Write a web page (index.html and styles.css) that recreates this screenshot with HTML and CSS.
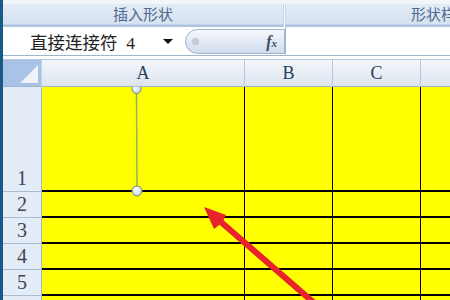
FILE: index.html
```html
<!DOCTYPE html>
<html lang="zh-CN">
<head>
    <meta charset="UTF-8">
    <title>直接连接符</title>
    <link rel="stylesheet" href="styles.css">
</head>
<body>
    <div class="app">
        <div class="edge"></div>
        <div class="main">
            <div class="ribbon">
                <div class="group group-insert">插入形状</div>
                <div class="group-sep"></div>
                <div class="group group-style">形状样式</div>
            </div>

            <div class="formula-bar">
                <div class="name-box">
                    <span class="name-text">直接连接符&nbsp;&nbsp;4</span>
                    <span class="drop"></span>
                </div>
                <div class="fx-pill">
                    <span class="dot"></span>
                    <span class="fx"><i>f</i><small>x</small></span>
                </div>
                <div class="formula-input"></div>
            </div>

            <div class="sheet">
                <div class="corner"><span class="tri"></span></div>
                <div class="col-head">A</div>
                <div class="col-head">B</div>
                <div class="col-head">C</div>
                <div class="col-head"></div>

                <div class="row-head">1</div>
                <div class="cell"></div><div class="cell"></div><div class="cell"></div><div class="cell"></div>
                <div class="row-head">2</div>
                <div class="cell"></div><div class="cell"></div><div class="cell"></div><div class="cell"></div>
                <div class="row-head">3</div>
                <div class="cell"></div><div class="cell"></div><div class="cell"></div><div class="cell"></div>
                <div class="row-head">4</div>
                <div class="cell"></div><div class="cell"></div><div class="cell"></div><div class="cell"></div>
                <div class="row-head">5</div>
                <div class="cell"></div><div class="cell"></div><div class="cell"></div><div class="cell"></div>
                <div class="row-head"></div>
                <div class="cell"></div><div class="cell"></div><div class="cell"></div><div class="cell"></div>
            </div>
        </div>

        <!-- connector shape + red annotation arrow drawn over the sheet -->
        <svg class="overlay" width="450" height="300" viewBox="0 0 450 300">
            <defs>
                <clipPath id="below-head">
                    <rect x="0" y="87" width="450" height="213"/>
                </clipPath>
                <radialGradient id="handle" cx="40%" cy="35%" r="70%">
                    <stop offset="0" stop-color="#ffffff"/>
                    <stop offset="1" stop-color="#b9cfee"/>
                </radialGradient>
            </defs>
            <line x1="136.5" y1="90" x2="137" y2="191" stroke="#86b95f" stroke-width="1.5"/>
            <circle cx="136.5" cy="89" r="4.5" fill="url(#handle)" stroke="#7a8a66" stroke-width="1" clip-path="url(#below-head)"/>
            <circle cx="137" cy="191" r="5" fill="url(#handle)" stroke="#7a8a66" stroke-width="1"/>
            <polygon fill="#e8232b"
                points="204,207 226,215 223.5,220.2 322,305.7 318,310.3 219.5,224.8 214,229"/>
        </svg>
    </div>
</body>
</html>
```

FILE: styles.css
```css
* {
    margin: 0;
    padding: 0;
    box-sizing: border-box;
}

body {
    width: 450px;
    height: 300px;
    overflow: hidden;
    background: #ffffff;
    font-family: "Liberation Serif", "Noto Sans CJK SC", serif;
}

.app {
    position: relative;
    display: flex;
    width: 450px;
    height: 300px;
    overflow: hidden;
}

.edge {
    width: 3px;
    flex: none;
    background: #185a86;
}

.main {
    flex: 1;
    display: flex;
    flex-direction: column;
    overflow: hidden;
}

/* ribbon group captions */
.ribbon {
    display: flex;
    height: 27px;
    padding-top: 4px;
    background: #f2f6fb;
    border-bottom: 2px solid #aec3dc;
    flex: none;
}

.group {
    flex: none;
    height: 21px;
    line-height: 20px;
    text-align: center;
    font-family: "Noto Sans CJK SC", sans-serif;
    font-size: 15px;
    color: #50698e;
    background: linear-gradient(#e3ebf6, #d6e2f1);
    border-bottom: 1px solid #c3d2e6;
}

.group-insert {
    width: 280px;
}

.group-sep {
    width: 3px;
    flex: none;
    height: 23px;
    background: #f8fafd;
    border-left: 1px solid #c8d5e6;
    border-right: 1px solid #c8d5e6;
}

.group-style {
    width: 310px;
}

/* name box and formula bar */
.formula-bar {
    display: flex;
    height: 29px;
    flex: none;
    background: #ffffff;
    border-bottom: 1px solid #9fb4cd;
}

.name-box {
    width: 180px;
    display: flex;
    align-items: center;
    padding-left: 27px;
}

.name-text {
    font-family: "Liberation Serif", "Noto Sans CJK SC", serif;
    font-size: 17.5px;
    color: #222222;
    flex: 1;
}

.drop {
    width: 0;
    height: 0;
    margin-right: 10px;
    border-left: 5px solid transparent;
    border-right: 5px solid transparent;
    border-top: 5px solid #111111;
}

.fx-pill {
    width: 100px;
    margin: 2px 0 1px 2px;
    display: flex;
    align-items: center;
    justify-content: space-between;
    padding: 0 7px 0 6px;
    background: linear-gradient(#f6f8fc, #cfdcee);
    border: 1px solid #9fb3cc;
    border-radius: 13px 0 0 13px;
}

.dot {
    width: 7px;
    height: 7px;
    border-radius: 50%;
    background: #c4ccd6;
}

.fx {
    font-family: "Liberation Serif", serif;
    font-weight: bold;
    font-size: 16px;
    color: #3d4c62;
}

.fx small {
    font-size: 11px;
    font-style: italic;
}

.formula-input {
    flex: 1;
    border-left: 1px solid #9fb3cc;
}

/* worksheet grid */
.sheet {
    margin-top: 3px;
    border-top: 1px solid #b9c9dc;
    display: grid;
    grid-template-columns: 39px 203px 88px 88px 40px;
    grid-template-rows: 27px 105px 26px 26px 26px 26px 26px;
}

.corner {
    position: relative;
    background: #a9c3e6;
    border-right: 1px solid #c6d4e6;
    border-bottom: 1px solid #9eb6ce;
}

.tri {
    position: absolute;
    right: 3px;
    bottom: 3px;
    width: 0;
    height: 0;
    border-left: 18px solid transparent;
    border-bottom: 18px solid #eef3fa;
}

.col-head {
    display: flex;
    align-items: center;
    justify-content: center;
    background: linear-gradient(#f4f7fb, #dde5f0);
    border-right: 1px solid #b7c8dc;
    border-bottom: 1px solid #9eb6ce;
    font-size: 18px;
    color: #2a3f5c;
}

.row-head {
    display: flex;
    align-items: flex-end;
    justify-content: center;
    padding-bottom: 1px;
    background: #e4ecf7;
    border-right: 1px solid #9eb6ce;
    border-bottom: 1px solid #a8bcd2;
    font-size: 20px;
    line-height: 24px;
    color: #3b4658;
}

.cell {
    background: #ffff00;
    border-right: 1px solid #000000;
    border-bottom: 2px solid #000000;
}

.overlay {
    position: absolute;
    left: 0;
    top: 0;
    pointer-events: none;
}
```
